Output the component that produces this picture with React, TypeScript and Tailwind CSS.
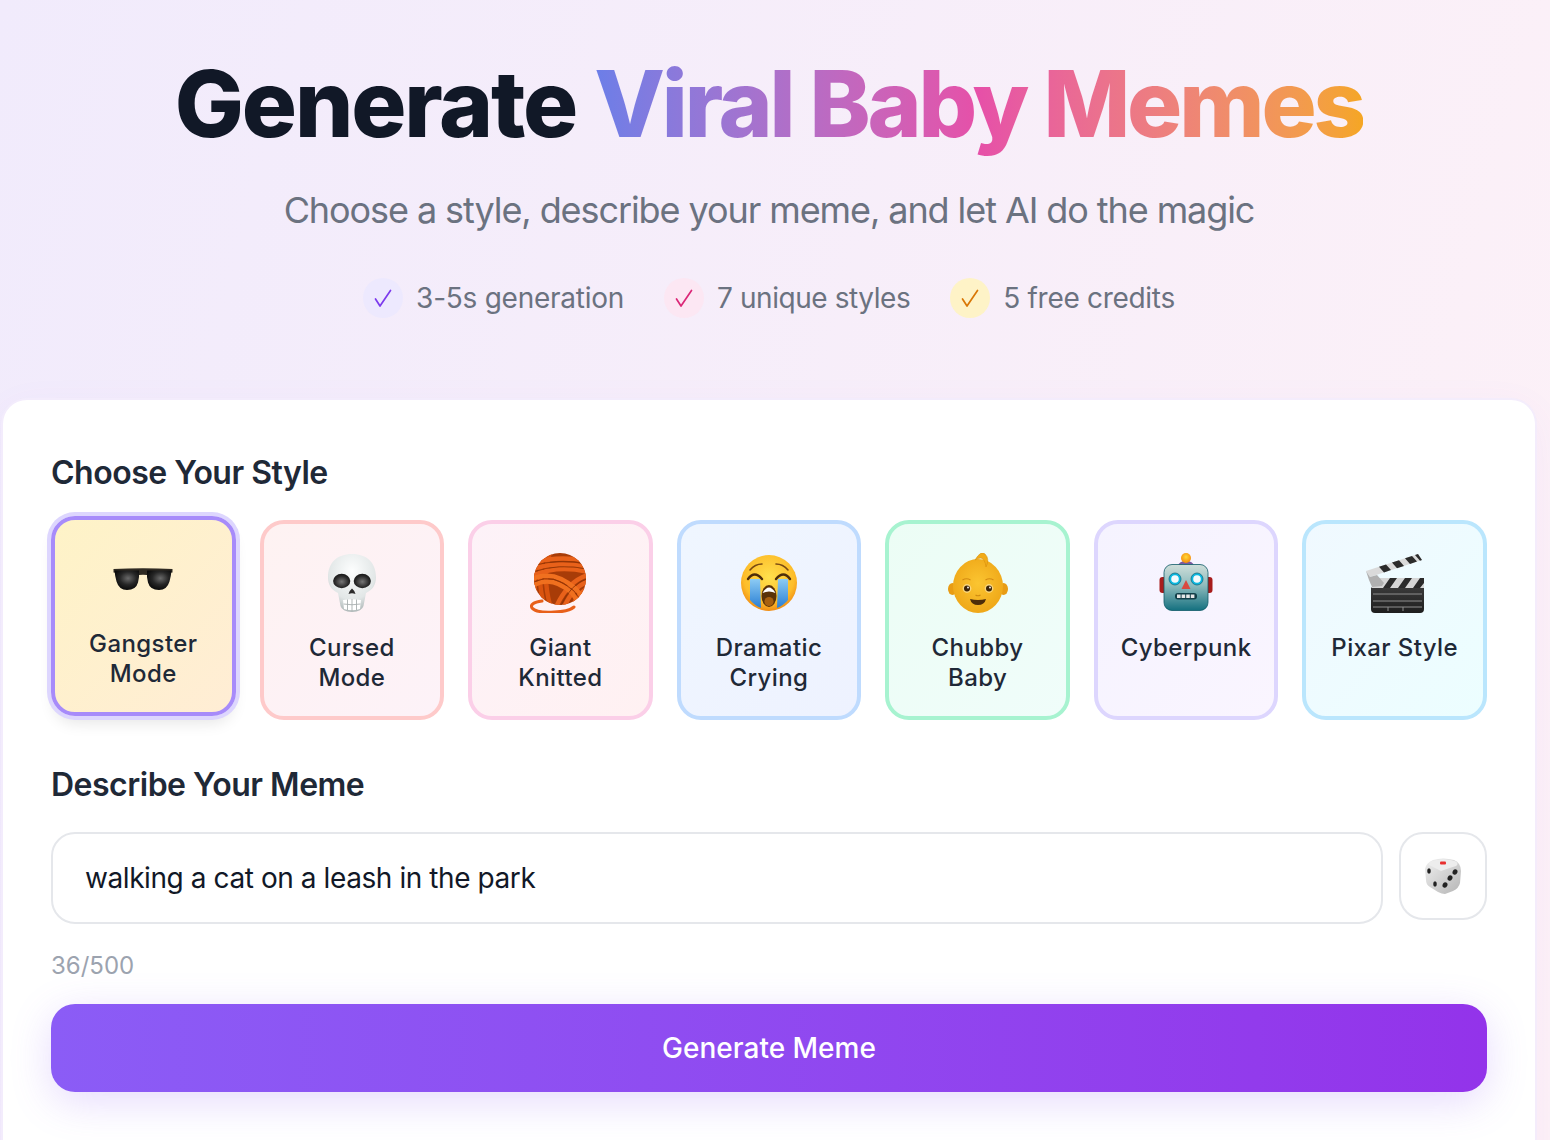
import React from 'react'

const Sunglasses = () => (
  <svg viewBox="0 0 60 60" className="w-[60px] h-[60px]">
    <defs>
      <radialGradient id="lens" cx="0.55" cy="0.4" r="0.6">
        <stop offset="0" stopColor="#6a6a6a" />
        <stop offset="0.55" stopColor="#262626" />
        <stop offset="1" stopColor="#0a0a0a" />
      </radialGradient>
    </defs>
    <g transform="translate(0 1.5)">
      <path d="M0.5 18.5 Q30 17 59.5 18.5 L59.5 22 L38 25 Q30 23.5 22 25 L0.5 22Z" fill="#2f2a22" />
      <path d="M1.5 20 L26 20 Q26.5 27 25 32 Q23 39.5 14 39.5 Q6 39.5 3.5 31 Q2 26 1.5 20Z" fill="url(#lens)" />
      <path d="M58.5 20 L34 20 Q33.5 27 35 32 Q37 39.5 46 39.5 Q54 39.5 56.5 31 Q58 26 58.5 20Z" fill="url(#lens)" />
    </g>
  </svg>
)

const Skull = () => (
  <svg viewBox="0 0 60 60" className="w-[60px] h-[60px]">
    <defs>
      <radialGradient id="bone" cx="0.5" cy="0.3" r="0.75">
        <stop offset="0" stopColor="#fdfefe" />
        <stop offset="0.65" stopColor="#e2e7e7" />
        <stop offset="1" stopColor="#a3adad" />
      </radialGradient>
      <radialGradient id="socket" cx="0.5" cy="0.55" r="0.6">
        <stop offset="0" stopColor="#777" />
        <stop offset="0.65" stopColor="#2a2a2a" />
        <stop offset="1" stopColor="#111" />
      </radialGradient>
    </defs>
    <path d="M30 1 C45 1 54 10 54 24 C54 32 50.5 37 44 40 L41.5 53 Q40 58.5 30 59 Q20 58.5 18.5 53 L16 40 C9.5 37 6 32 6 24 C6 10 15 1 30 1Z" fill="url(#bone)" />
    <ellipse cx="19.7" cy="28" rx="8.6" ry="7.2" fill="url(#socket)" />
    <ellipse cx="40.3" cy="28" rx="8.6" ry="7.2" fill="url(#socket)" />
    <path d="M30 35.5 Q33 38 33.5 41 Q30 39.5 26.5 41 Q27 38 30 35.5Z" fill="#2c2c2c" />
    <path d="M21 47 Q30 45.5 39 47 L38 56 Q30 58.5 22 56Z" fill="#fff" />
    <path d="M25.5 46.5V57M30 46V58M34.5 46.5V57M21.5 51Q30 52.5 38.5 51" stroke="#a8afaf" strokeWidth="0.9" fill="none" />
  </svg>
)

const Yarn = () => (
  <svg viewBox="0 0 60 60" className="w-[60px] h-[60px]">
    <defs>
      <clipPath id="ball">
        <circle cx="30" cy="26" r="26" />
      </clipPath>
    </defs>
    <circle cx="30" cy="26" r="26" fill="#a83c08" />
    <g clipPath="url(#ball)" fill="none">
      <g stroke="#d9530f" strokeWidth="4.4">
        <path d="M14 0 Q6 22 14 52" />
        <path d="M20 0 Q12 22 20 52" />
        <path d="M8 0 Q0 22 8 52" />
      </g>
      <g stroke="#e8611a" strokeWidth="4.4">
        <path d="M58 22 Q38 28 26 54" />
        <path d="M60 28 Q44 32 34 54" />
        <path d="M60 34 Q50 38 42 54" />
        <path d="M2 10 Q28 2 58 8" />
        <path d="M2 16 Q28 8 58 14" />
        <path d="M4 22 Q28 12 58 19" />
      </g>
      <g stroke="#f0701f" strokeWidth="4.4">
        <path d="M4 32 Q22 22 42 40 L50 52" />
        <path d="M2 26 Q24 16 46 36 L54 46" />
      </g>
      <g stroke="#8a3205" strokeWidth="0.8">
        <path d="M4 29 Q23 19 44 38 L52 49" />
        <path d="M2 13 Q28 5 58 11" />
        <path d="M3 19 Q28 10 58 16" />
        <path d="M59 25 Q41 30 30 54" />
      </g>
    </g>
    <path d="M12 48 Q-1 50 2 55 Q6 60 24 59 Q38 59 44 54" fill="none" stroke="#e8601a" strokeWidth="3" strokeLinecap="round" />
  </svg>
)

const Crying = () => (
  <svg viewBox="0 0 60 60" className="w-[60px] h-[60px]">
    <defs>
      <radialGradient id="face1" cx="0.5" cy="0.4" r="0.6">
        <stop offset="0" stopColor="#ffe04d" />
        <stop offset="0.75" stopColor="#fdbd2a" />
        <stop offset="1" stopColor="#f08c14" />
      </radialGradient>
      <linearGradient id="tear" x1="0" y1="0" x2="0" y2="1">
        <stop offset="0" stopColor="#8ccbf4" />
        <stop offset="1" stopColor="#2a7fd4" />
      </linearGradient>
    </defs>
    <circle cx="30" cy="30" r="28" fill="url(#face1)" />
    <path d="M11 26 L21 26 L22 55 Q15 52 11 47Z" fill="url(#tear)" />
    <path d="M49 26 L39 26 L38 55 Q45 52 49 47Z" fill="url(#tear)" />
    <path d="M9 26 Q15.5 17 23 26" fill="none" stroke="#4e2d0a" strokeWidth="2.4" strokeLinecap="round" />
    <path d="M37 26 Q44.5 17 51 26" fill="none" stroke="#4e2d0a" strokeWidth="2.4" strokeLinecap="round" />
    <path d="M11 17 Q16 11 23 11" fill="none" stroke="#7a4a12" strokeWidth="1.6" strokeLinecap="round" />
    <path d="M49 17 Q44 11 37 11" fill="none" stroke="#7a4a12" strokeWidth="1.6" strokeLinecap="round" />
    <ellipse cx="30" cy="43" rx="7.5" ry="11" fill="#5a3208" />
    <path d="M23.5 40 Q30 29 36.5 40 Q30 37 23.5 40Z" fill="#fff" />
    <ellipse cx="30" cy="48.5" rx="4.6" ry="4.6" fill="#a8600f" />
  </svg>
)

const BabyFace = () => (
  <svg viewBox="0 0 60 60" className="w-[60px] h-[60px]">
    <defs>
      <radialGradient id="face2" cx="0.5" cy="0.45" r="0.6">
        <stop offset="0" stopColor="#fbc531" />
        <stop offset="1" stopColor="#eea516" />
      </radialGradient>
    </defs>
    <ellipse cx="4.5" cy="36" rx="4.5" ry="6" fill="#e89c14" />
    <ellipse cx="55.5" cy="36" rx="4.5" ry="6" fill="#e89c14" />
    <ellipse cx="30" cy="33" rx="25" ry="27" fill="url(#face2)" />
    <path d="M27 7 Q33 -3 37 1 Q42 6 38 14 Q37 6 33 5 Q30 5 27 7Z" fill="#f1ab18" stroke="#d98f0e" strokeWidth="0.6" />
    <circle cx="19" cy="35.5" r="4.4" fill="#fbd67a" />
    <circle cx="41" cy="35.5" r="4.4" fill="#fbd67a" />
    <circle cx="19" cy="35.5" r="3" fill="#3c2408" />
    <circle cx="41" cy="35.5" r="3" fill="#3c2408" />
    <circle cx="20" cy="34.5" r="0.9" fill="#fff" />
    <circle cx="42" cy="34.5" r="0.9" fill="#fff" />
    <path d="M14.5 27 Q18.5 24.5 22.5 27" fill="none" stroke="#d48b12" strokeWidth="1.2" />
    <path d="M37.5 27 Q41.5 24.5 45.5 27" fill="none" stroke="#d48b12" strokeWidth="1.2" />
    <path d="M27.5 42 Q30 43.5 32.5 42" fill="none" stroke="#cf8a10" strokeWidth="1.2" />
    <path d="M22 46 Q30 48 38 46 Q36.5 52 30 52 Q23.5 52 22 46Z" fill="#4e2d0a" />
  </svg>
)

const Robot = () => (
  <svg viewBox="0 0 60 60" className="w-[60px] h-[60px]">
    <defs>
      <linearGradient id="robo" x1="0" y1="0" x2="0" y2="1">
        <stop offset="0" stopColor="#cfded9" />
        <stop offset="0.45" stopColor="#8fbcbe" />
        <stop offset="1" stopColor="#14707f" />
      </linearGradient>
      <radialGradient id="bulb" cx="0.5" cy="0.4" r="0.6">
        <stop offset="0" stopColor="#ffd83a" />
        <stop offset="1" stopColor="#f58a0a" />
      </radialGradient>
    </defs>
    <rect x="3.5" y="24" width="7" height="16" rx="3" fill="#a81c1c" />
    <rect x="49.5" y="24" width="7" height="16" rx="3" fill="#a81c1c" />
    <path d="M22 13 Q23 8 30 8 Q37 8 38 13 Q30 17 22 13Z" fill="#7a5a9e" />
    <circle cx="30" cy="5" r="5" fill="url(#bulb)" />
    <rect x="8" y="11.5" width="44" height="46" rx="8" fill="url(#robo)" stroke="#0f5a68" strokeWidth="0.8" />
    <circle cx="19" cy="26" r="6" fill="#0bb7df" stroke="#186d82" strokeWidth="0.8" />
    <circle cx="19" cy="26" r="3.8" fill="#f4fbfd" />
    <circle cx="41" cy="26" r="6" fill="#0bb7df" stroke="#186d82" strokeWidth="0.8" />
    <circle cx="41" cy="26" r="3.8" fill="#f4fbfd" />
    <path d="M30 27 L34.5 36 L25.5 36Z" fill="#d9493f" />
    <rect x="19" y="40" width="22" height="6.5" rx="3" fill="#123f48" />
    <path d="M21 41.5h3.6v3.5H21zM25.6 41.5h3.6v3.5h-3.6zM30.2 41.5h3.6v3.5h-3.6zM34.8 41.5h3.6v3.5h-3.6z" fill="#e5e7e7" />
  </svg>
)

const Clapper = () => (
  <svg viewBox="0 0 60 60" className="w-[60px] h-[60px]">
    <defs>
      <linearGradient id="slate" x1="0" y1="0" x2="0" y2="1">
        <stop offset="0" stopColor="#3a3a3a" />
        <stop offset="1" stopColor="#1e1e1e" />
      </linearGradient>
    </defs>
    <path d="M6 34 H59 V56 Q59 60 55 60 H10 Q6 60 6 56Z" fill="url(#slate)" />
    <path d="M12 25 H59 V35 H6Z" fill="#d6d6d6" />
    <path d="M18 35 L25 25 H32 L25 35Z M33 35 L40 25 H47 L40 35Z M48 35 L55 25 H59 V30 L55 35Z" fill="#2b2b2b" />
    <path d="M1 18 L53 1 L57 7 L5 24Z" fill="#dadada" />
    <path d="M14 13.75 L21 11.5 L26 17.1 L19 19.4Z M27 9.5 L34 7.2 L39 12.9 L32 15.2Z M40 5.25 L47 3 L52 8.6 L45 10.9Z M50 2 L53 1 L57 7 L55 7.65Z" fill="#2b2b2b" />
    <path d="M1 18 L5 24 L12 22 L19 30 L17 33 L7 34 L4 27Z" fill="#b0b0b0" />
    <path d="M8 41 H57M8 48 H57M8 54 H57" stroke="#8f8f8f" strokeWidth="1" />
    <path d="M23 54V58M38 54V58" stroke="#8f8f8f" strokeWidth="1" />
  </svg>
)

const Dice = () => (
  <svg viewBox="0 0 36 36" className="w-9 h-9">
    <defs>
      <linearGradient id="dice" x1="0" y1="0" x2="1" y2="1">
        <stop offset="0" stopColor="#f0f0f0" />
        <stop offset="1" stopColor="#b5b5b5" />
      </linearGradient>
    </defs>
    <path d="M8 2 Q18 -1 29 2 Q36 5 36 13 L35 25 Q34 30 28 33 L20 36 Q17 36 13 34 L5 29 Q1 27 1 22 L0 11 Q1 5 8 2Z" fill="url(#dice)" />
    <path d="M6 3.5 Q18 -1 31 3.5 Q34 6 31 8 Q24 10 16 13 Q10 10 4 7 Q3 5 6 3.5Z" fill="#ededed" />
    <rect x="15" y="3.5" width="6" height="3" rx="1" fill="#e8302f" />
    <ellipse cx="4" cy="13" rx="1.8" ry="2.8" fill="#222" />
    <ellipse cx="10" cy="26" rx="1.8" ry="2.8" fill="#222" />
    <ellipse cx="30" cy="14" rx="2.4" ry="2.8" fill="#222" transform="rotate(25 30 14)" />
    <ellipse cx="25" cy="20" rx="2.4" ry="2.8" fill="#222" transform="rotate(25 25 20)" />
    <ellipse cx="20" cy="27" rx="2.4" ry="2.8" fill="#222" transform="rotate(25 20 27)" />
  </svg>
)

const Check = ({ color }: { color: string }) => (
  <svg viewBox="0 0 20 20" className={`w-5 h-5 ${color}`} fill="none" stroke="currentColor" strokeWidth="1.7" strokeLinecap="round" strokeLinejoin="round">
    <path d="M2.5 11 L7 18 L17.5 2.5" />
  </svg>
)

const styles = [
  { label: ['Gangster', 'Mode'], icon: <Sunglasses />, cls: 'border-[#a78bfa] from-[#fef3c7] to-[#ffedd5] shadow-[0_0_0_4px_#ddd6fe,0_10px_15px_-3px_rgba(0,0,0,0.1)] -translate-y-1' },
  { label: ['Cursed', 'Mode'], icon: <Skull />, cls: 'border-[#fecaca] from-[#fef2f2] to-[#fdf2f8]' },
  { label: ['Giant', 'Knitted'], icon: <Yarn />, cls: 'border-[#fbcfe8] from-[#fdf2f8] to-[#fff1f2]' },
  { label: ['Dramatic', 'Crying'], icon: <Crying />, cls: 'border-[#bfdbfe] from-[#eff6ff] to-[#eef2ff]' },
  { label: ['Chubby', 'Baby'], icon: <BabyFace />, cls: 'border-[#a7f3d0] from-[#ecfdf5] to-[#f0fdfa]' },
  { label: ['Cyberpunk'], icon: <Robot />, cls: 'border-[#ddd6fe] from-[#f5f3ff] to-[#faf5ff]' },
  { label: ['Pixar Style'], icon: <Clapper />, cls: 'border-[#bae6fd] from-[#f0f9ff] to-[#ecfeff]' },
]

const badges = [
  { text: '3-5s generation', bg: 'bg-[#ede9fe]', color: 'text-[#7c3aed]', track: 'tracking-[-0.25px]' },
  { text: '7 unique styles', bg: 'bg-[#fce7f3]', color: 'text-[#db2777]', track: 'tracking-[-0.44px]' },
  { text: '5 free credits', bg: 'bg-[#fef3c7]', color: 'text-[#d97706]', track: 'tracking-[-0.3px]' },
]

export default function App() {
  return (
    <div className="h-[1140px] overflow-hidden bg-[linear-gradient(105deg,#f1ebfc,#fdf1f7)] font-['Inter',sans-serif]">
      <div className="w-[1538px]">
        <div className="pt-[51px] text-center">
          <h1 className="text-[92px] leading-[106px] font-extrabold tracking-[-2.15px] text-[#111827]">
            Generate{' '}
            <span className="bg-gradient-to-r from-[#6b7ee8] via-[#e650a8] to-[#f5a623] bg-clip-text tracking-[-3.1px] text-transparent">
              Viral Baby Memes
            </span>
          </h1>
          <p className="mt-[31px] text-[36px] leading-[44px] tracking-[-1.08px] text-[#6b7280]">
            Choose a style, describe your meme, and let AI do the magic
          </p>
          <div className="mt-[46px] flex justify-center gap-10">
            {badges.map((b) => (
              <div key={b.text} className="flex items-center gap-[13px]">
                <span className={`flex h-10 w-10 items-center justify-center rounded-full ${b.bg}`}>
                  <Check color={b.color} />
                </span>
                <span className={`text-[28px] leading-10 text-[#6b7280] ${b.track}`}>{b.text}</span>
              </div>
            ))}
          </div>
        </div>

        <div className="mx-[3px] mt-[82px] h-[800px] rounded-[24px] bg-white px-[48px] pt-[51px] shadow-[0_0_0_2px_rgba(243,236,252,0.9),0_10px_40px_rgba(139,92,246,0.06)]">
          <h2 className="text-[32px] leading-[44px] font-semibold tracking-[-0.5px] text-[#1f2937]">Choose Your Style</h2>
          <div className="mt-[25px] grid grid-cols-7 gap-6">
            {styles.map((s) => (
              <button
                key={s.label[0]}
                className={`flex h-[200px] flex-col items-center rounded-[24px] border-[4px] bg-gradient-to-br pt-[29px] ${s.cls}`}
              >
                {s.icon}
                <span className="mt-5 text-[24px] leading-[30px] font-medium tracking-[0.4px] text-[#1f2937]">
                  {s.label.map((l) => (
                    <span key={l} className="block">{l}</span>
                  ))}
                </span>
              </button>
            ))}
          </div>

          <h2 className="mt-[43px] text-[32px] leading-[44px] font-semibold tracking-[-0.5px] text-[#1f2937]">Describe Your Meme</h2>
          <div className="mt-[25px] flex items-start gap-4">
            <div className="flex h-[92px] flex-1 items-center rounded-[24px] border-2 border-[#e5e7eb] bg-white px-[32px] text-[28px] tracking-[-0.42px] text-[#111827]">
              walking a cat on a leash in the park
            </div>
            <button className="flex h-[88px] w-[88px] items-center justify-center rounded-[24px] border-2 border-[#e5e7eb] bg-white">
              <Dice />
            </button>
          </div>
          <p className="mt-[25px] text-[24px] leading-[34px] text-[#9ca3af]">36/500</p>
          <button className="mt-[21px] h-[88px] w-full rounded-[24px] bg-gradient-to-r from-[#8b5cf6] to-[#9333ea] text-[28px] font-medium text-white shadow-[0_10px_40px_rgba(139,92,246,0.22)]">
            Generate Meme
          </button>
        </div>
      </div>
    </div>
  )
}
